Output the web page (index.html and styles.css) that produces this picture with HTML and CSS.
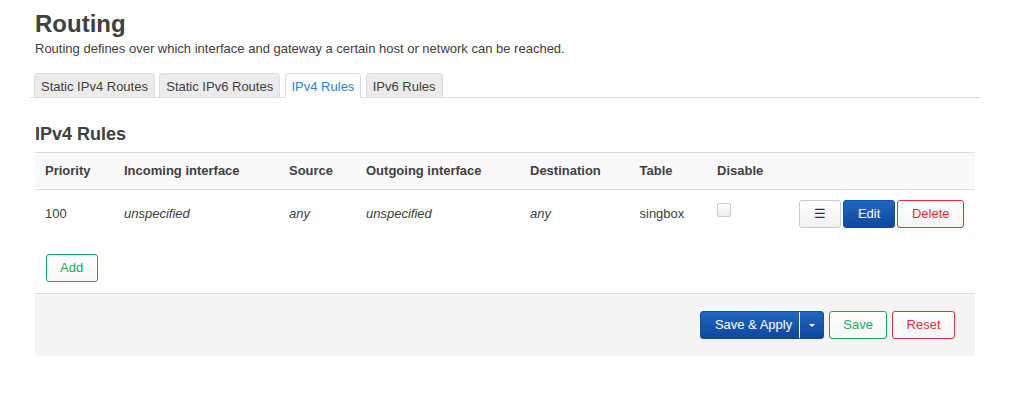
FILE: index.html
```html
<!DOCTYPE html>
<html>
<head>
<meta charset="utf-8">
<link rel="stylesheet" href="styles.css">
</head>
<body>
<div class="page">
  <h2 class="title">Routing</h2>
  <div class="desc">Routing defines over which interface and gateway a certain host or network can be reached.</div>
  <ul class="tabs">
    <li class="tab">Static IPv4 Routes</li>
    <li class="tab">Static IPv6 Routes</li>
    <li class="tab active">IPv4 Rules</li>
    <li class="tab">IPv6 Rules</li>
  </ul>
  <div class="section">
    <h3 class="section-title">IPv4 Rules</h3>
    <table class="rules">
      <colgroup>
        <col class="c1"><col class="c2"><col class="c3"><col class="c4"><col class="c5"><col class="c6"><col class="c7"><col>
      </colgroup>
      <thead>
        <tr>
          <th>Priority</th>
          <th>Incoming interface</th>
          <th>Source</th>
          <th>Outgoing interface</th>
          <th>Destination</th>
          <th>Table</th>
          <th>Disable</th>
          <th></th>
        </tr>
      </thead>
      <tbody>
        <tr>
          <td>100</td>
          <td><em>unspecified</em></td>
          <td><em>any</em></td>
          <td><em>unspecified</em></td>
          <td><em>any</em></td>
          <td>singbox</td>
          <td><span class="checkbox"></span></td>
          <td class="actions">
            <div class="btn-row">
              <button class="btn btn-drag">&#9776;</button>
              <button class="btn btn-blue">Edit</button>
              <button class="btn btn-red">Delete</button>
            </div>
          </td>
        </tr>
      </tbody>
    </table>
    <div class="create">
      <button class="btn btn-green">Add</button>
    </div>
  </div>
  <div class="footer">
    <div class="split btn-blue">
      <span class="split-main">Save &amp; Apply</span>
      <span class="split-arrow"><span class="caret"></span></span>
    </div>
    <button class="btn btn-green">Save</button>
    <button class="btn btn-red">Reset</button>
  </div>
</div>
</body>
</html>
```
FILE: styles.css
```css
* { box-sizing: border-box; }
html, body {
  margin: 0;
  padding: 0;
  background: #fff;
}
body {
  font-family: "Liberation Sans", Arial, sans-serif;
  font-size: 13px;
  color: #404040;
}
.page {
  width: 950px;
  margin-left: 30px;
  padding-top: 10px;
}
.title {
  margin: 0 5px;
  font-size: 24px;
  line-height: 28px;
  font-weight: bold;
  color: #404040;
}
.desc {
  margin: 3px 5px 0;
  line-height: 16px;
}
.tabs {
  list-style: none;
  margin: 16px 0 0;
  padding: 0 0 0 4px;
  display: flex;
  gap: 4.3px;
  border-bottom: 1px solid #ddd;
}
.tab {
  border: 1px solid #ddd;
  border-bottom: none;
  border-radius: 4px 4px 0 0;
  background: #ebebeb;
  padding: 2px 6px 0;
  line-height: 21px;
  color: #404040;
}
.tab.active {
  background: #fff;
  color: #2e7fd6;
  margin-bottom: -1px;
  padding-bottom: 1px;
}
.section {
  margin: 0 5px;
}
.section-title {
  margin: 25px 0 7px;
  font-size: 18px;
  line-height: 22px;
  font-weight: bold;
  color: #404040;
}
.rules {
  width: 940px;
  table-layout: fixed;
  border-collapse: collapse;
}
.c1 { width: 79px; }
.c2 { width: 165px; }
.c3 { width: 77px; }
.c4 { width: 164px; }
.c5 { width: 109.5px; }
.c6 { width: 77.5px; }
.c7 { width: 80px; }
.rules th {
  background: #f9f9f9;
  border-top: 1px solid #ddd;
  border-bottom: 1px solid #ddd;
  padding: 10px 10px;
  line-height: 16px;
  text-align: left;
  font-weight: bold;
  height: 37px;
}
.rules td {
  padding: 10px 10px;
  line-height: 16px;
  vertical-align: middle;
  height: 48px;
}
.rules em { font-style: italic; }
.checkbox {
  display: block;
  width: 14px;
  height: 14px;
  border: 1px solid #ccc;
  border-radius: 2px;
  background: linear-gradient(#fff, #eee);
  margin-top: -8px;
}
.rules td.actions {
  padding-right: 11px;
}
.btn-row {
  display: flex;
  justify-content: flex-end;
  gap: 2.6px;
}
.btn {
  font-family: "Liberation Sans", Arial, sans-serif;
  font-size: 13px;
  height: 28px;
  line-height: 26px;
  padding: 0 13.5px;
  border: 1px solid #ccc;
  border-radius: 3px;
  background: linear-gradient(#fff, #f0f0f0);
  color: #404040;
  margin: 0;
  cursor: pointer;
}
.btn-drag {
  width: 41.5px;
  padding: 0;
  color: #333;
  background: linear-gradient(#fff, #f1f1f1);
}
.btn-blue {
  background: linear-gradient(#2066c2, #0e479c);
  border: 1px solid #0f4ea6;
  color: #fff;
}
.btn-red {
  border-color: #e53131;
  color: #e62e2e;
  background: linear-gradient(#fff, #f6f6f6);
}
.btn-green {
  border-color: #1fa85b;
  color: #1fa85b;
  background: linear-gradient(#fff, #f6f6f6);
}
.create {
  padding: 16px 0 0 10.5px;
  height: 44px;
}
.footer {
  margin: 11px 5px 0;
  border-top: 1px solid #ddd;
  background: #f4f4f4;
  padding: 0 20px;
  height: 63px;
  display: flex;
  align-items: center;
  justify-content: flex-end;
  gap: 4.6px;
  border-radius: 0 0 3px 3px;
}
.split {
  display: flex;
  align-items: stretch;
  height: 28px;
  border-radius: 3px;
  font-size: 13px;
  line-height: 26px;
}
.split-main {
  padding: 0 7px 0 14px;
}
.split-arrow {
  border-left: 1px solid #fff;
  width: 24px;
  display: flex;
  align-items: center;
  justify-content: center;
}
.caret {
  width: 0;
  height: 0;
  border-left: 3px solid transparent;
  border-right: 3px solid transparent;
  border-top: 3px solid #fff;
}
```
